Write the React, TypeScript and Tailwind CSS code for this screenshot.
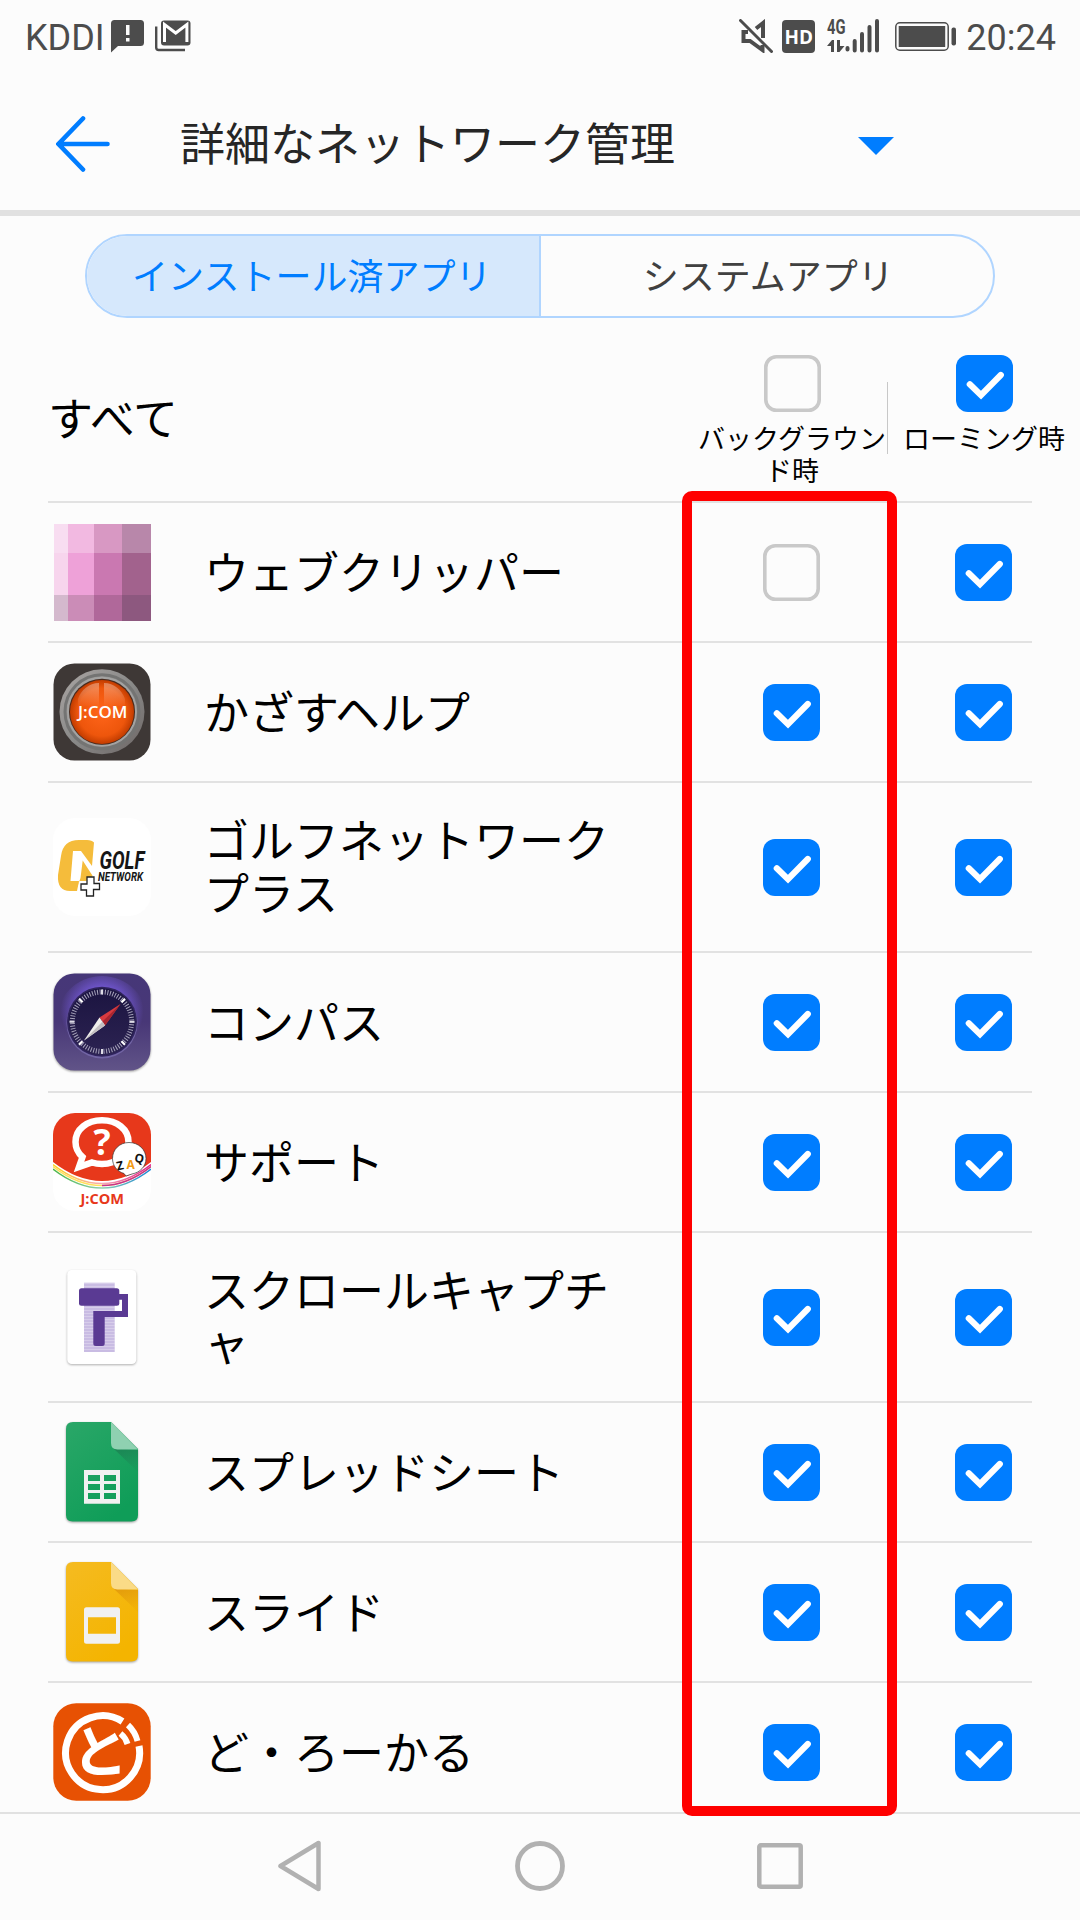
import { useState } from 'react'
import type { ReactNode } from 'react'

interface AppEntry {
  id: string
  name: string
  icon: ReactNode
  tall?: boolean
  background: boolean
  roaming: boolean
}

const clipperRows = [
  { y: 0.5, h: 29.2, colors: ['#f8ddf1', '#f2b9e1', '#d898c3', '#b887aa'] },
  { y: 29.7, h: 42.3, colors: ['#f7d5ed', '#eea1d8', '#ca78b1', '#a2628d'] },
  { y: 72, h: 25.7, colors: ['#d4b9cd', '#cb8cb7', '#b0689a', '#8d587f'] },
]
const clipperCols = [
  { x: 0.7, w: 14.6 },
  { x: 15.3, w: 25.7 },
  { x: 41, w: 27.7 },
  { x: 68.7, w: 29.3 },
]

function ClipperIcon() {
  return (
    <svg className="w-[98px] h-[98px]" viewBox="0 0 98 98" shapeRendering="crispEdges">
      {clipperRows.map((row) =>
        row.colors.map((color, i) => (
          <rect key={color} x={clipperCols[i].x} y={row.y} width={clipperCols[i].w} height={row.h} fill={color} />
        ))
      )}
    </svg>
  )
}

function HelpIcon() {
  return (
    <svg className="w-[98px] h-[98px]" viewBox="0 0 98 98">
      <defs>
        <linearGradient id="ring" x1="0" y1="0" x2="1" y2="1">
          <stop offset="0" stopColor="#aaa5a3" />
          <stop offset="0.5" stopColor="#8a8a89" />
          <stop offset="1" stopColor="#6d6665" />
        </linearGradient>
        <radialGradient id="orange" cx="0.5" cy="0.5" r="0.5">
          <stop offset="0" stopColor="#ff651a" />
          <stop offset="0.75" stopColor="#ee560c" />
          <stop offset="1" stopColor="#c23c00" />
        </radialGradient>
        <linearGradient id="gloss" x1="0" y1="0" x2="0" y2="1">
          <stop offset="0" stopColor="#fff" stopOpacity="0.35" />
          <stop offset="1" stopColor="#fff" stopOpacity="0.02" />
        </linearGradient>
      </defs>
      <rect x="0.5" y="0.5" width="97" height="97" rx="21" fill="#3e3836" />
      <circle cx="49" cy="48.7" r="42.5" fill="url(#ring)" />
      <circle cx="49" cy="48.7" r="37" fill="none" stroke="#747473" strokeWidth="3" />
      <circle cx="49" cy="48.7" r="34" fill="none" stroke="#a3a3a2" strokeWidth="2" />
      <circle cx="49" cy="48.7" r="33" fill="#4a2a1c" />
      <circle cx="49" cy="49" r="32" fill="url(#orange)" />
      <path d="M46 20v23H25v-7c3-9 11-16 21-16zM51 20v23h21v-7c-3-9-11-16-21-16z" fill="url(#gloss)" />
      <text x="25" y="54.5" textLength="49.5" lengthAdjust="spacingAndGlyphs" fontSize="17" fontWeight="600" className="font-['Open_Sans',sans-serif]" fill="#fff">
        J:COM
      </text>
    </svg>
  )
}

function GolfIcon() {
  return (
    <svg className="w-[98px] h-[98px]" viewBox="0 0 98 98">
      <rect width="98" height="98" rx="22" fill="#fff" />
      <path d="M26 22h8q5 0 7 2.500L39 48 28 33h-8l-2.500 30H26l-2 10h-7Q4 73 5 57L8 38Q10 22 26 22z" fill="#f5bc3b" />
      <path d="M29.700 42.500L39.700 58 33 63h-7l-3 9 4.500-12z" fill="#f5bc3b" />
      <text x="46.500" y="50.500" textLength="45" lengthAdjust="spacingAndGlyphs" fontSize="25" fontWeight="700" fontStyle="italic" className="font-[Roboto,sans-serif]" fill="#161616">
        GOLF
      </text>
      <text x="45" y="63" textLength="45" lengthAdjust="spacingAndGlyphs" fontSize="12.500" fontWeight="700" fontStyle="italic" className="font-[Roboto,sans-serif]" fill="#161616">
        NETWORK
      </text>
      <path d="M34 59h7v6.500h5.500v6h-6V78h-7v-6H28v-6h6z" fill="#fff" stroke="#222" strokeWidth="1.300" />
    </svg>
  )
}

function CompassIcon() {
  return (
    <svg className="w-[98px] h-[98px] overflow-visible drop-shadow-[0_1px_1px_rgba(0,0,0,0.4)]" viewBox="0 0 98 98">
      <defs>
        <linearGradient id="plate" x1="0" y1="0" x2="0" y2="1">
          <stop offset="0" stopColor="#463778" />
          <stop offset="0.5" stopColor="#483777" />
          <stop offset="1" stopColor="#615488" />
        </linearGradient>
        <radialGradient id="glow" cx="0.5" cy="0.38" r="0.45">
          <stop offset="0.6" stopColor="#6b52c4" />
          <stop offset="1" stopColor="#6b52c4" stopOpacity="0" />
        </radialGradient>
        <linearGradient id="dial" x1="0" y1="0" x2="0" y2="1">
          <stop offset="0" stopColor="#1b1440" />
          <stop offset="1" stopColor="#2c2352" />
        </linearGradient>
      </defs>
      <rect x="0.500" y="0.500" width="97" height="97" rx="21" fill="url(#plate)" />
      <circle cx="49" cy="49" r="46" fill="url(#glow)" />
      <circle cx="49" cy="50" r="35.500" fill="#7265a5" />
      <circle cx="49" cy="48.700" r="35" fill="#30245e" />
      <circle cx="49" cy="48.700" r="33.500" fill="url(#dial)" />
      <circle cx="49" cy="48.700" r="29.700" fill="none" stroke="#a8a4bb" strokeWidth="5" strokeDasharray="1 1.592" />
      <path d="M49 16.500v5M49 76v5M16.500 48.700h5M76.500 48.700h5" stroke="#dedce6" strokeWidth="2" />
      <path d="M26 25.700l3.500 3.500M72 25.700l-3.500 3.500M26 71.700l3.500-3.500M72 71.700l-3.500-3.500" stroke="#fff" strokeWidth="2" />
      <path d="M67.500 31L46.500 44.500l5.500 8z" fill="#d83a3f" />
      <path d="M67.500 31L49.500 48.500l2.500 4z" fill="#a82630" />
      <path d="M31 67.500L46.500 44.500l5.500 8z" fill="#f0efec" />
      <path d="M31 67.500L49.500 48.500l2.500 4z" fill="#c4c0c2" />
    </svg>
  )
}

function SupportIcon() {
  return (
    <svg className="w-[98px] h-[98px]" viewBox="0 0 98 98">
      <defs>
        <clipPath id="supportClip">
          <rect width="98" height="98" rx="22" />
        </clipPath>
        <linearGradient id="stripePink" x1="0" x2="1">
          <stop offset="0" stopColor="#fbd21e" />
          <stop offset="0.5" stopColor="#f8a9b4" />
          <stop offset="1" stopColor="#e4158c" />
        </linearGradient>
        <linearGradient id="stripeBlue" x1="0" x2="1">
          <stop offset="0" stopColor="#4bb648" />
          <stop offset="0.5" stopColor="#8fd0b0" />
          <stop offset="1" stopColor="#1b86d8" />
        </linearGradient>
      </defs>
      <g clipPath="url(#supportClip)">
        <rect width="98" height="98" fill="#fff" />
        <path d="M0 0h98v49q-49 38-98 0z" fill="#e7381b" />
        <g fill="none" strokeWidth="1.400">
          <path d="M0 51.500q49 38 98 0" stroke="url(#stripePink)" />
          <path d="M0 53.500q49 38 98 0" stroke="#ffe05a" />
          <path d="M49 72.500q25 0 49-19" stroke="#c7328f" />
          <path d="M0 56q49 38 98 0" stroke="url(#stripeBlue)" />
        </g>
      </g>
      <path d="M49 7.300c15 0 26.500 9 26.500 21.700S64 51 49 51c-4 0-7-.5-10-1.500L26 54l3.500-10C25 40 22.500 35 22.500 29 22.500 16.300 34 7.300 49 7.300z" fill="none" stroke="#fff" strokeWidth="6.500" />
      <text x="49" y="42" textAnchor="middle" fontSize="36" fontWeight="700" className="font-['Open_Sans',sans-serif]" fill="#fff">
        ?
      </text>
      <path d="M76 29.500c9.500 0 17 7 17 16 0 8-6 14-14 15.500l-6 2-2-2.500c-7-2-11.500-8-11.500-15 0-9 7-16 16.500-16z" fill="#fff" stroke="#333" strokeWidth="0.700" />
      <g fontSize="12" fontWeight="700" className="font-['Open_Sans',sans-serif]">
        <text x="63.500" y="57" transform="rotate(-12 67 52)" fill="#111">Z</text>
        <text x="73.500" y="56" fill="#f39a12">A</text>
        <text x="81.500" y="49.500" transform="rotate(12 86 45)" fill="#111">Q</text>
      </g>
      <text x="27.500" y="91" textLength="43.500" lengthAdjust="spacingAndGlyphs" fontSize="15" fontWeight="700" className="font-['Open_Sans',sans-serif]" fill="#e7381b">
        J:COM
      </text>
    </svg>
  )
}

function ScrollCaptureIcon() {
  return (
    <svg className="w-[98px] h-[98px] overflow-visible" viewBox="0 0 98 98">
      <defs>
        <pattern id="scan" width="4" height="3" patternUnits="userSpaceOnUse">
          <rect width="4" height="1" fill="#fff" fillOpacity="0.250" />
        </pattern>
      </defs>
      <rect x="14.300" y="2" width="69" height="94" rx="4.500" fill="#fff" className="drop-shadow-[0_1.500px_1px_rgba(0,0,0,0.300)]" />
      <rect x="31" y="14.700" width="30.700" height="69.300" fill="#c9bce3" />
      <rect x="31" y="14.700" width="30.700" height="69.300" fill="url(#scan)" />
      <rect x="26" y="20.300" width="40.300" height="17.400" rx="2.500" fill="#5a3a93" />
      <path d="M66 26h9v23H51.700v26.500q0 2.500-2.500 2.500h-6.400q-2.500 0-2.500-2.500V43H69V31.700h-3z" fill="#5a3a93" />
    </svg>
  )
}

// Page with a folded corner, shared by the sheet and slide icons
function DocIcon({ id, from, to, fold, shade, children }: { id: string; from: string; to: string; fold: string; shade: string; children: ReactNode }) {
  return (
    <svg className="w-[98px] h-[98px] overflow-visible drop-shadow-[0_1px_1px_rgba(0,0,0,0.35)]" viewBox="0 0 98 98">
      <defs>
        <linearGradient id={id} x1="0" y1="0" x2="0.6" y2="1">
          <stop offset="0" stopColor={from} />
          <stop offset="1" stopColor={to} />
        </linearGradient>
        <linearGradient id={`${id}-shade`} x1="0" y1="0" x2="0.3" y2="1">
          <stop offset="0" stopColor={shade} />
          <stop offset="1" stopColor={shade} stopOpacity="0.150" />
        </linearGradient>
      </defs>
      <path d="M20-1h38l27 27v66q0 6.500-6.500 6.500h-59Q13 98.500 13 92V6q0-7 7-7z" fill={`url(#${id})`} />
      <path d="M60 25l25 24V27z" fill={`url(#${id}-shade)`} />
      <path d="M58-1l27 27.500H64.500Q58 26.500 58 20z" fill={fold} />
      {children}
    </svg>
  )
}

function SheetIcon() {
  return (
    <DocIcon id="sheet" from="#2aa768" to="#0f9d58" fold="#8fd1b1" shade="#1c8454">
      <path fillRule="evenodd" fill="#f1f1f1" d="M31 47h36v33.700H31zM35 52v6h12v-6zM51 52v6h12v-6zM35 61v6h12v-6zM51 61v6h12v-6zM35 70v6h12v-6zM51 70v6h12v-6z" />
    </DocIcon>
  )
}

function SlideIcon() {
  return (
    <DocIcon id="slide" from="#f5bb21" to="#f4b400" fold="#fadb87" shade="#e29a0b">
      <path fillRule="evenodd" fill="#f1f1f1" d="M33.500 44.200h31q2.500 0 2.500 2.500v31.500q0 2.500-2.500 2.500h-31q-2.500 0-2.500-2.500V46.700q0-2.500 2.500-2.500zM35 54.300v16.400h28V54.300z" />
    </DocIcon>
  )
}

function LocalIcon() {
  return (
    <svg className="w-[98px] h-[98px]" viewBox="0 0 98 98">
      <rect x="0.300" y="0.300" width="97.400" height="97.400" rx="23" fill="#e75103" />
      <g fill="none" stroke="#fff">
        <path d="M69.500 18.500A37 37 0 1 0 86 43" strokeWidth="7" />
        <path d="M67.500 30.500q5 4 7 10.500M75 22q7 6.500 9.500 16" strokeWidth="6" />
      </g>
      <text x="19" y="69" fontSize="56" fontWeight="700" className="font-['Noto_Sans_CJK_JP',sans-serif]" fill="#fff">
        と
      </text>
    </svg>
  )
}

const initialApps: AppEntry[] = [
  { id: 'clipper', name: 'ウェブクリッパー', icon: <ClipperIcon />, background: false, roaming: true },
  { id: 'help', name: 'かざすヘルプ', icon: <HelpIcon />, background: true, roaming: true },
  { id: 'golf', name: 'ゴルフネットワーク\nプラス', icon: <GolfIcon />, tall: true, background: true, roaming: true },
  { id: 'compass', name: 'コンパス', icon: <CompassIcon />, background: true, roaming: true },
  { id: 'support', name: 'サポート', icon: <SupportIcon />, background: true, roaming: true },
  { id: 'scroll', name: 'スクロールキャプチ\nャ', icon: <ScrollCaptureIcon />, tall: true, background: true, roaming: true },
  { id: 'sheet', name: 'スプレッドシート', icon: <SheetIcon />, background: true, roaming: true },
  { id: 'slide', name: 'スライド', icon: <SlideIcon />, background: true, roaming: true },
  { id: 'local', name: 'ど・ろーかる', icon: <LocalIcon />, background: true, roaming: true },
]

function Checkbox({ checked, onClick }: { checked: boolean; onClick: () => void }) {
  return (
    <button onClick={onClick} className="block w-[57px] h-[57px] shrink-0">
      <svg className="w-[57px] h-[57px]" viewBox="0 0 57 57">
        {checked ? (
          <>
            <rect width="57" height="57" rx="12" fill="#007dff" />
            <path d="M13.800 29.300L25 40.200 44.800 20" fill="none" stroke="#fff" strokeWidth="6.200" strokeLinecap="round" />
          </>
        ) : (
          <rect x="1.800" y="1.800" width="53.400" height="53.400" rx="10.500" fill="none" stroke="#c9c9c9" strokeWidth="3.600" />
        )}
      </svg>
    </button>
  )
}

function StatusBar() {
  return (
    <div className="h-[72px] pl-[25px] pr-6 flex items-center justify-between font-[Roboto,sans-serif] text-[36px] leading-[72px] text-[#4c4c4c]">
      <div className="flex items-center">
        <span className="w-[86px] pt-1">KDDI</span>
        <svg className="w-[33px] h-[33px]" viewBox="0 0 33 33">
          <path fillRule="evenodd" fill="#4c4c4c" d="M3.500 0h26Q33 0 33 3.500v19Q33 26 29.500 26H7l-7 6.500v-29Q0 0 3.500 0zM15 5v10h3.500V5zM15 18v3.500h3.500V18z" />
        </svg>
        <svg className="w-9 h-8 ml-[11px]" viewBox="0 0 36 32">
          <rect x="6" y="0.500" width="29.500" height="25" rx="3" fill="#4c4c4c" />
          <path d="M9.500 22V4.500l11.200 8.500 11.200-8.500V22" fill="none" stroke="#fff" strokeWidth="3" />
          <path d="M1.200 6.500v21q0 2.500 2.500 2.500H30" fill="none" stroke="#4c4c4c" strokeWidth="2.400" />
        </svg>
      </div>
      <div className="flex items-center">
        <svg className="w-[34px] h-[34px]" viewBox="0 0 34 34" fill="none" stroke="#4c4c4c">
          <path d="M9 13H4.500v9H11l12.500 9v-5M17 9.500l7-5.500v15" strokeWidth="4" />
          <path d="M1.500 1.500l31 31" strokeWidth="3" strokeLinecap="round" />
        </svg>
        <svg className="w-[33px] h-[33px] ml-[9px]" viewBox="0 0 33 33">
          <rect width="33" height="33" rx="4" fill="#4c4c4c" />
          <text x="2.500" y="23.500" textLength="28.500" lengthAdjust="spacingAndGlyphs" fontSize="20" fontWeight="700" className="font-['Open_Sans',sans-serif]" fill="#fff">
            HD
          </text>
        </svg>
        <svg className="w-[53px] h-[34px] ml-3 overflow-visible" viewBox="0 0 53 34">
          <text x="0" y="14.500" textLength="18.500" lengthAdjust="spacingAndGlyphs" fontSize="20" fontWeight="700" className="font-[Roboto,sans-serif]" fill="#4c4c4c">
            4G
          </text>
          <path d="M7 21v12H4v-6H0l5-6zM10 33V21h3v6h4.500l-5 6z" fill="#4c4c4c" />
          <path d="M20.500 29v1.500M27.700 22v9.500M35 15v16.500M42.500 8v23.500M50 2v29.500" stroke="#4c4c4c" strokeWidth="4" strokeLinecap="round" />
        </svg>
        <svg className="w-[62px] h-[30px] ml-[15px] mt-[2px]" viewBox="0 0 62 30">
          <rect x="0.800" y="0.800" width="52.400" height="27.400" rx="4" fill="none" stroke="#4c4c4c" strokeWidth="1.500" />
          <rect x="3.700" y="4" width="46.500" height="21" fill="#4c4c4c" />
          <rect x="56.500" y="5.500" width="4.500" height="18" rx="2" fill="#4c4c4c" />
        </svg>
        <span className="ml-[9px] pt-1">20:24</span>
      </div>
    </div>
  )
}

export default function App() {
  const [apps, setApps] = useState(initialApps)
  const [tab, setTab] = useState('installed')

  const toggle = (id: string, key: 'background' | 'roaming') => {
    setApps(apps.map((app) => (app.id === id ? { ...app, [key]: !app[key] } : app)))
  }

  const toggleAll = (key: 'background' | 'roaming') => {
    const next = !apps.every((app) => app[key])
    setApps(apps.map((app) => ({ ...app, [key]: next })))
  }

  return (
    <div className="relative w-[1080px] h-[1920px] overflow-hidden flex flex-col bg-[#fcfcfc] font-['Noto_Sans_CJK_JP',sans-serif]">
      <StatusBar />

      {/* Title bar */}
      <header className="h-36 shrink-0 border-b-[6px] border-[#e1e1e1] pl-14 pr-[186px] flex items-center">
        <svg className="w-[54px] h-[56px] mt-[6px]" viewBox="0 0 54 56" fill="none" stroke="#007dff" strokeWidth="4.600" strokeLinecap="round">
          <path d="M51.500 28H3M27 2.500L2.500 28 27 53.500" />
        </svg>
        <h1 className="ml-[70px] mt-0.5 text-[45px] leading-[60px] text-[#262626]">詳細なネットワーク管理</h1>
        <svg className="w-9 h-[18px] ml-auto mt-[10px]" viewBox="0 0 36 18">
          <path d="M0 0h36L18 18z" fill="#007dff" />
        </svg>
      </header>

      {/* Tabs */}
      <div className="mt-[18px] mx-[85px] h-[84px] shrink-0 flex rounded-full border-2 border-[#b0d5ff] overflow-hidden text-[36px] leading-[76px]">
        <button
          onClick={() => setTab('installed')}
          className={tab === 'installed' ? 'flex-1 pb-1 pr-0.5 bg-[#d6e8fc] text-[#007dff]' : 'flex-1 pb-1 text-[#404040]'}
        >
          インストール済アプリ
        </button>
        <div className="w-0.5 bg-[#b0d5ff]"></div>
        <button
          onClick={() => setTab('system')}
          className={tab === 'system' ? 'flex-1 pb-1 bg-[#d6e8fc] text-[#007dff]' : 'flex-1 pb-1 pl-[3px] text-[#404040]'}
        >
          システムアプリ
        </button>
      </div>

      {/* Select all */}
      <div className="h-[183px] shrink-0 flex text-black">
        <div className="w-[696px] pl-12 pt-[69px] text-[45px] leading-[60px]">すべて</div>
        <div className="w-48 pt-[37px] flex flex-col items-center">
          <Checkbox checked={apps.every((app) => app.background)} onClick={() => toggleAll('background')} />
          <div className="mt-[10px] text-[27px] leading-8 text-center whitespace-pre">{'バックグラウン\nド時'}</div>
        </div>
        <div className="w-px h-[72px] mt-16 -ml-px bg-[#c8c8c8]"></div>
        <div className="w-48 pt-[37px] flex flex-col items-center">
          <Checkbox checked={apps.every((app) => app.roaming)} onClick={() => toggleAll('roaming')} />
          <div className="mt-[10px] text-[27px] leading-8 whitespace-pre">ローミング時</div>
        </div>
      </div>

      {/* App list */}
      <div className="h-[1311px] shrink-0 mx-12 overflow-hidden">
        {apps.map((app) => (
          <div
            key={app.id}
            className={`grid grid-cols-[156px_559px_192px_57px] items-center border-t-2 border-[#e2e2e2] ${app.tall ? 'h-[170px]' : 'h-[140px]'}`}
          >
            <div className="pl-[5px]">{app.icon}</div>
            <div className="pb-1 text-[45px] leading-[53px] text-black whitespace-pre">{app.name}</div>
            <Checkbox checked={app.background} onClick={() => toggle(app.id, 'background')} />
            <Checkbox checked={app.roaming} onClick={() => toggle(app.id, 'roaming')} />
          </div>
        ))}
      </div>

      {/* Navigation bar */}
      <nav className="h-[108px] shrink-0 border-t-2 border-[#e1e1e1] pl-[278px] pr-[277px] pb-0.5 flex items-center justify-between">
        <svg className="w-11 h-[52px]" viewBox="0 0 44 52" fill="none" stroke="#b1b1b1" strokeWidth="4.500" strokeLinejoin="round">
          <path d="M40.500 3v46L2.500 26z" />
        </svg>
        <svg className="w-[50px] h-[50px]" viewBox="0 0 50 50" fill="none" stroke="#b1b1b1" strokeWidth="4.800">
          <circle cx="25" cy="25" r="22.500" />
        </svg>
        <svg className="w-[46px] h-[46px]" viewBox="0 0 46 46" fill="none" stroke="#b1b1b1" strokeWidth="4.500">
          <rect x="2.300" y="2.300" width="41.400" height="41.400" rx="1.500" />
        </svg>
      </nav>

      {/* Highlight frame over the background column */}
      <div className="absolute left-[682px] top-[491px] w-[215px] h-[1325px] rounded-[10px] border-[10px] border-[#ff0000] pointer-events-none"></div>
    </div>
  )
}
